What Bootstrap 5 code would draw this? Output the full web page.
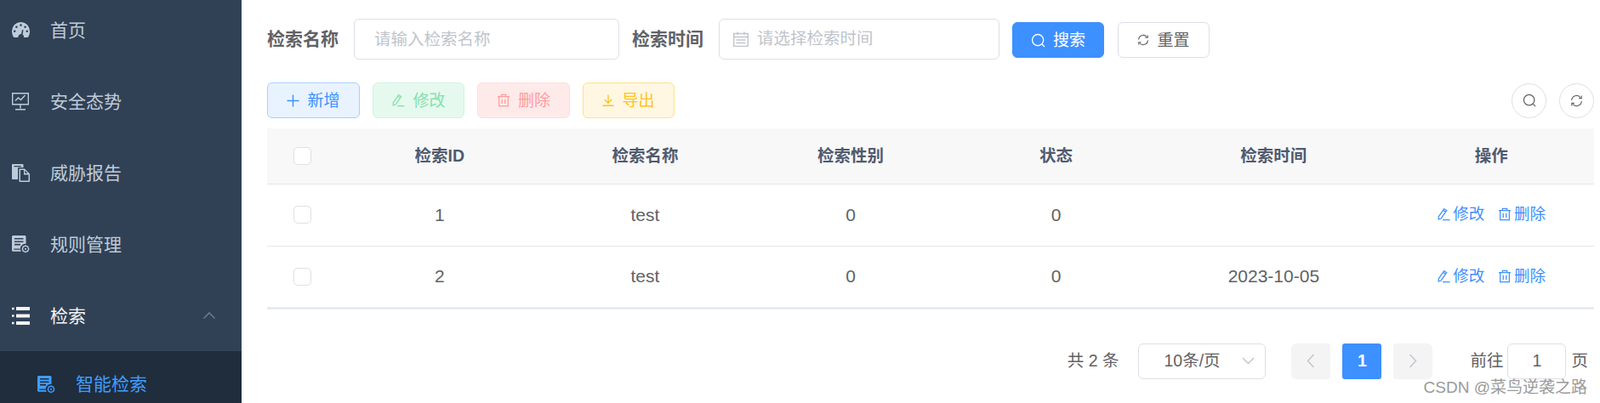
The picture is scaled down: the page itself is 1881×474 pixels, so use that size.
<!DOCTYPE html>
<html lang="zh-CN">
<head>
  <meta charset="UTF-8" />
  <meta name="viewport" content="width=device-width, initial-scale=1.0"/>
  <title>智能检索</title>
  <link href="https://cdn.jsdelivr.net/npm/bootstrap@5.3.2/dist/css/bootstrap.min.css" rel="stylesheet">
  <style>
    html, body { height: 474px; overflow: hidden; }
    body { font-family: "Liberation Sans", "Noto Sans CJK SC", sans-serif; color: #606266; background: #fff; }
    .ico { display: block; flex: none; fill: none; stroke: currentColor; stroke-width: 1.4; }
    .ico-fill { fill: currentColor; stroke: none; }

    /* 侧边栏 */
    .side-bar { width: 284px; height: 474px; flex: none; background: #304156; overflow: hidden; }
    .side-menu { margin-top: -7px; }
    .side-item, .side-item:hover { height: 84px; padding: 0 0 0 14px; gap: 24px; font-size: 21px; color: #bfcbd9; }
    .side-item span { padding-top: 2px; }
    .side-item.opened, .side-item.opened:hover { color: #f4f4f5; }
    .side-arrow { margin-left: auto; margin-right: 31px; color: #75808e; }
    .side-sub, .side-sub:hover { background: #1f2d3d; height: 78px; padding: 0 0 0 44px; gap: 24px; font-size: 21px; color: #409eff; }

    /* 主区域 */
    .main-area { padding: 22px 7px 0 30px; min-width: 0; }
    .search-row { height: 48px; }
    .search-label { font-size: 21px; font-weight: 700; color: #606266; }
    .search-input { width: 312px; height: 48px; margin: 0 15px 0 18px; padding: 0 23px; font-size: 19.5px; color: #606266; border: 1.5px solid #dcdfe6; border-radius: 6px; }
    .search-input::placeholder { color: #c0c4cc; }
    .date-box { width: 330px; height: 48px; margin: 0 15px 0 18px; padding: 0 16px; gap: 10px; font-size: 19.5px; color: #c0c4cc; border: 1.5px solid #dcdfe6; border-radius: 6px; }
    .act-btn { height: 42px; padding: 0; gap: 9px; font-size: 19px; line-height: 1; border-radius: 6px; border-width: 1.5px; display: inline-flex; align-items: center; justify-content: center; }
    .btn-search { width: 108px; background: #3d90ff; border-color: #3d90ff; color: #fff; margin: 2px 16px 0 0; }
    .btn-reset { width: 108px; background: #fff; border-color: #dcdfe6; color: #606266; margin-top: 2px; }
    .tool-row { margin-top: 27px; gap: 15px; }
    .btn-add { width: 109px; background: #e8f3ff; border-color: #a6d0ff; color: #3d90ff; }
    .btn-edit { width: 108px; background: #e6f9ef; border-color: #d0f5e0; color: #85e0ac; }
    .btn-del { width: 109px; background: #ffeaea; border-color: #ffdcdc; color: #ff9c9c; }
    .btn-out { width: 108px; background: #fff7e1; border-color: #ffe08a; color: #ffc21f; }
    .round-btn { width: 41px; height: 41px; padding: 0; border: 1.5px solid #dcdfe6; border-radius: 50%; background: #fff; color: #606266; display: inline-flex; align-items: center; justify-content: center; }
    .round-group { gap: 15px; }

    /* 表格 */
    .data-table { margin: 12px 0 0; table-layout: fixed; width: 1560px; font-size: 21px; color: #606266; border-bottom: 3px solid #e8ebf5; }
    .data-table > :not(caption) > * > * { padding: 0; text-align: center; vertical-align: middle; border-bottom: 1.5px solid #e3e6ee; color: inherit; background: transparent; box-shadow: none; }
    .data-table thead tr { height: 65px; background: #f8f8f9; }
    .data-table thead th { font-size: 19.5px; font-weight: 700; color: #515a6e; }
    .data-table tbody tr { height: 73px; }
    .data-table tbody tr:last-child td { border-bottom: 0; }
    .check-box { width: 21px; height: 21px; margin: 0; border: 1.5px solid #dcdfe6; border-radius: 3px; float: none; display: block; margin-left: 31px; }
    .col-check { width: 82px; }
    .col-base { width: 241.6px; }
    .col-time { width: 270px; }
    .op-link { display: inline-flex; align-items: center; gap: 3px; padding-top: 2px; font-size: 18.5px; color: #3d90ff; text-decoration: none; }
    .op-link + .op-link { margin-left: 10px; }

    /* 分页 */
    .pager-row { margin-top: 40px; height: 42px; padding-right: 7px; font-size: 19.5px; color: #606266; }
    .pager-select { width: 150px; height: 42px; margin: 0 30px 0 23px; padding: 0 12px 0 29px; border: 1.5px solid #dcdfe6; border-radius: 6px; white-space: nowrap; }
    .pager-list { gap: 15px; margin: 0 44px 0 0; }
    .pager-list .page-link { width: 46px; height: 42px; padding: 0; display: flex; align-items: center; justify-content: center; border: 0; border-radius: 3px; background: #f4f4f5; color: #c0c4cc; }
    .pager-list .active .page-link { background: #3d90ff; color: #fff; font-size: 19.5px; font-weight: 700; }
    .pager-jump { width: 69px; height: 42px; margin: 0 6px 0 5px; padding: 0; text-align: center; font-size: 19.5px; color: #606266; border: 1.5px solid #dcdfe6; border-radius: 6px; }
    .water-mark { position: absolute; right: 15px; top: 445px; font-size: 19px; line-height: 22px; color: #9a9a9a; white-space: nowrap; }
  </style>
</head>
<body>
  <svg width="0" height="0" class="position-absolute">
    <symbol id="i-edit" viewBox="0 0 18 18"><path d="M2.500 12.300 9.800 1.800l3.300 2.300-7.300 10.500-3.300 1z M8.500 3.700l3.300 2.300 M8 16.500h9.500"/></symbol>
    <symbol id="i-del" viewBox="0 0 18 18"><path d="M1 4.200h16 M6 4.200V1.500h6v2.700 M3 4.200v12.300h12V4.200 M7 7.500v6 M11 7.500v6"/></symbol>
    <symbol id="i-search" viewBox="0 0 18 18"><circle cx="8.600" cy="8.600" r="7"/><path d="m13.700 13.700 3.300 3.300"/></symbol>
    <symbol id="i-refresh" viewBox="0 0 18 18"><path d="M2 8.500A7 7 0 0 1 14.500 4.500 M15.800 1.800v3.700h-3.600 M16 9.500A7 7 0 0 1 3.500 13.500 M2.200 16.200v-3.700h3.600"/></symbol>
    <symbol id="i-server" viewBox="0 0 21 21"><path class="ico-fill" fill-rule="evenodd" d="M1.500 0H15c.8 0 1.500.7 1.500 1.500V10a5.600 5.600 0 0 0-5.600 8.800H1.500c-.8 0-1.500-.7-1.500-1.500V1.500C0 .7.700 0 1.500 0ZM3 3v1.600h10.500V3Zm0 3.400V8h10.500V6.400Zm0 3.400v1.600h7V9.800Zm-.7 5.700v1.300h7.200v-1.300Z"/><circle cx="16" cy="15.800" r="3.400" fill="none" stroke="currentColor" stroke-width="1.300"/><circle cx="16" cy="15.800" r="1.100" class="ico-fill"/><path d="M16 11.300v1.300M16 19v1.300M11.500 15.800h1.300M19.200 15.800h1.300M12.900 12.700l.9.900M18.200 18l.9.900M19.100 12.700l-.9.900M13.800 18l-.9.900" fill="none" stroke="currentColor" stroke-width="1.200"/></symbol>
  </svg>

  <div class="d-flex">
    <!-- 侧边栏 -->
    <aside class="side-bar">
      <nav class="nav flex-column side-menu">
        <a class="nav-link d-flex align-items-center side-item" href="#">
          <svg class="ico" width="21" height="18" viewBox="0 0 21 18"><path class="ico-fill" fill-rule="evenodd" d="M10.500 0a10.500 10.500 0 0 1 10.500 10.500c0 2.600-.6 5-1.600 6.700-.3.500-.8.800-1.400.800H14a4 4 0 0 0-1.400-3.600l.9-5.200-1.500-.3-1 5.100a3.800 3.800 0 0 0-3.700 4H3c-.6 0-1.100-.3-1.400-.8A13.600 13.600 0 0 1 0 10.500 10.500 10.500 0 0 1 10.500 0ZM10.500 2.300a1.300 1.300 0 1 0 0 2.600 1.300 1.300 0 0 0 0-2.600ZM5.400 4.500a1.300 1.300 0 1 0 0 2.600 1.300 1.300 0 0 0 0-2.600ZM15.600 4.500a1.300 1.300 0 1 0 0 2.600 1.300 1.300 0 0 0 0-2.600ZM3.200 9.400a1.300 1.300 0 1 0 0 2.600 1.300 1.300 0 0 0 0-2.600ZM17.800 9.400a1.300 1.300 0 1 0 0 2.600 1.300 1.300 0 0 0 0-2.600Z"/></svg>
          <span>首页</span>
        </a>
        <a class="nav-link d-flex align-items-center side-item" href="#">
          <svg class="ico" width="21" height="21" viewBox="0 0 21 21" stroke-width="1.300"><path d="M.7.700h18.600v13H.7z M10 14v4.500 M4 19.700h12 M4 9.500l3.500-3.500 3 2.500 5-5.500"/></svg>
          <span>安全态势</span>
        </a>
        <a class="nav-link d-flex align-items-center side-item" href="#">
          <svg class="ico" width="21" height="21" viewBox="0 0 21 21"><path class="ico-fill" fill-rule="evenodd" d="M1 0h11.500c.6 0 1 .4 1 1v3H8c-.6 0-1 .4-1 1v13H1c-.6 0-1-.4-1-1V1c0-.6.400-1 1-1ZM2.500 2v1.300h8.500V2Z"/><path class="ico-fill" fill-rule="evenodd" d="M8.500 5.500h6.500l6 6V20c0 .6-.4 1-1 1H9.500c-.6 0-1-.4-1-1Zm1.500 1.500v12.500h9.500v-7h-5.500V7Zm5.300.500v3.200h3.200Z"/></svg>
          <span>威胁报告</span>
        </a>
        <a class="nav-link d-flex align-items-center side-item" href="#">
          <svg class="ico" width="21" height="21"><use href="#i-server"/></svg>
          <span>规则管理</span>
        </a>
        <a class="nav-link d-flex align-items-center side-item opened" href="#">
          <svg class="ico" width="21" height="21" viewBox="0 0 21 21"><path class="ico-fill" d="M5 0h16v4H5zM5 8.500h16v4H5zM5 17h16v4H5zM0 .7h2.600v2.600H0zM0 9.200h2.600v2.600H0zM0 17.700h2.600v2.600H0z"/></svg>
          <span>检索</span>
          <svg class="ico side-arrow" width="14" height="8" viewBox="0 0 14 8"><path d="m.5 7.500 6.500-6.500 6.500 6.500"/></svg>
        </a>
        <a class="nav-link d-flex align-items-center side-sub" href="#">
          <svg class="ico" width="21" height="21"><use href="#i-server"/></svg>
          <span>智能检索</span>
        </a>
      </nav>
    </aside>

    <!-- 主区域 -->
    <main class="flex-grow-1 main-area">
      <form class="d-flex align-items-center search-row">
        <label class="search-label">检索名称</label>
        <input type="text" class="form-control search-input" placeholder="请输入检索名称">
        <label class="search-label">检索时间</label>
        <div class="d-flex align-items-center date-box">
          <svg class="ico" width="18" height="18" viewBox="0 0 18 18" stroke-width="1.200"><path d="M.7 2.500h16.600v15H.7z M.7 6.500h16.600 M5 .5v3.500 M13 .5v3.500 M3.500 10h11 M3.500 13.500h11" /></svg>
          <span>请选择检索时间</span>
        </div>
        <button type="button" class="btn act-btn btn-search">
          <svg class="ico" width="17" height="17"><use href="#i-search"/></svg>搜索
        </button>
        <button type="button" class="btn act-btn btn-reset">
          <svg class="ico" width="14" height="14"><use href="#i-refresh"/></svg>重置
        </button>
      </form>

      <div class="d-flex align-items-center tool-row">
        <button type="button" class="btn act-btn btn-add">
          <svg class="ico" width="15" height="15" viewBox="0 0 15 15"><path d="M7.500 .5v14 M.5 7.500h14"/></svg>新增
        </button>
        <button type="button" class="btn act-btn btn-edit">
          <svg class="ico" width="16" height="16"><use href="#i-edit"/></svg>修改
        </button>
        <button type="button" class="btn act-btn btn-del">
          <svg class="ico" width="16" height="16"><use href="#i-del"/></svg>删除
        </button>
        <button type="button" class="btn act-btn btn-out">
          <svg class="ico" width="14" height="14" viewBox="0 0 15 15"><path d="M7.500 .5v10 M3 6.500l4.500 4.500 4.500-4.500 M.5 14.200h14"/></svg>导出
        </button>
        <div class="ms-auto d-flex round-group">
          <button type="button" class="round-btn"><svg class="ico" width="16" height="16"><use href="#i-search"/></svg></button>
          <button type="button" class="round-btn"><svg class="ico" width="15" height="15"><use href="#i-refresh"/></svg></button>
        </div>
      </div>

      <table class="table data-table">
        <colgroup>
          <col class="col-check"><col class="col-base"><col class="col-base"><col class="col-base"><col class="col-base"><col class="col-time"><col>
        </colgroup>
        <thead>
          <tr>
            <th><input class="form-check-input check-box" type="checkbox"></th>
            <th>检索ID</th>
            <th>检索名称</th>
            <th>检索性别</th>
            <th>状态</th>
            <th>检索时间</th>
            <th>操作</th>
          </tr>
        </thead>
        <tbody id="rows"></tbody>
      </table>

      <div class="d-flex align-items-center justify-content-end pager-row">
        <span>共 2 条</span>
        <div class="d-flex align-items-center justify-content-between pager-select">
          <span>10条/页</span>
          <svg class="ico" width="15" height="9" viewBox="0 0 15 9" style="color:#c0c4cc"><path d="m1 1 6.500 6.500L14 1"/></svg>
        </div>
        <ul class="pagination pager-list">
          <li class="page-item"><a class="page-link" href="#"><svg class="ico" width="10" height="17" viewBox="0 0 10 17" stroke-width="2"><path d="M8.500 1 1.500 8.500l7 7.500"/></svg></a></li>
          <li class="page-item active"><a class="page-link" href="#">1</a></li>
          <li class="page-item"><a class="page-link" href="#"><svg class="ico" width="10" height="17" viewBox="0 0 10 17" stroke-width="2"><path d="m1.500 1 7 7.500-7 7.500"/></svg></a></li>
        </ul>
        <span>前往</span>
        <input type="text" class="form-control pager-jump" value="1">
        <span>页</span>
      </div>
    </main>
  </div>

  <div class="water-mark">CSDN @菜鸟逆袭之路</div>

  <script>
    const rows = [
      { id: 1, name: 'test', gender: 0, status: 0, time: '' },
      { id: 2, name: 'test', gender: 0, status: 0, time: '2023-10-05' }
    ];
    document.getElementById('rows').innerHTML = rows.map(r => `
      <tr>
        <td><input class="form-check-input check-box" type="checkbox"></td>
        <td>${r.id}</td>
        <td>${r.name}</td>
        <td>${r.gender}</td>
        <td>${r.status}</td>
        <td>${r.time}</td>
        <td>
          <a class="op-link" href="#"><svg class="ico" width="16" height="16"><use href="#i-edit"/></svg>修改</a>
          <a class="op-link" href="#"><svg class="ico" width="16" height="16"><use href="#i-del"/></svg>删除</a>
        </td>
      </tr>`).join('');
  </script>
  <script src="https://cdn.jsdelivr.net/npm/bootstrap@5.3.2/dist/js/bootstrap.bundle.min.js"></script>
</body>
</html>
